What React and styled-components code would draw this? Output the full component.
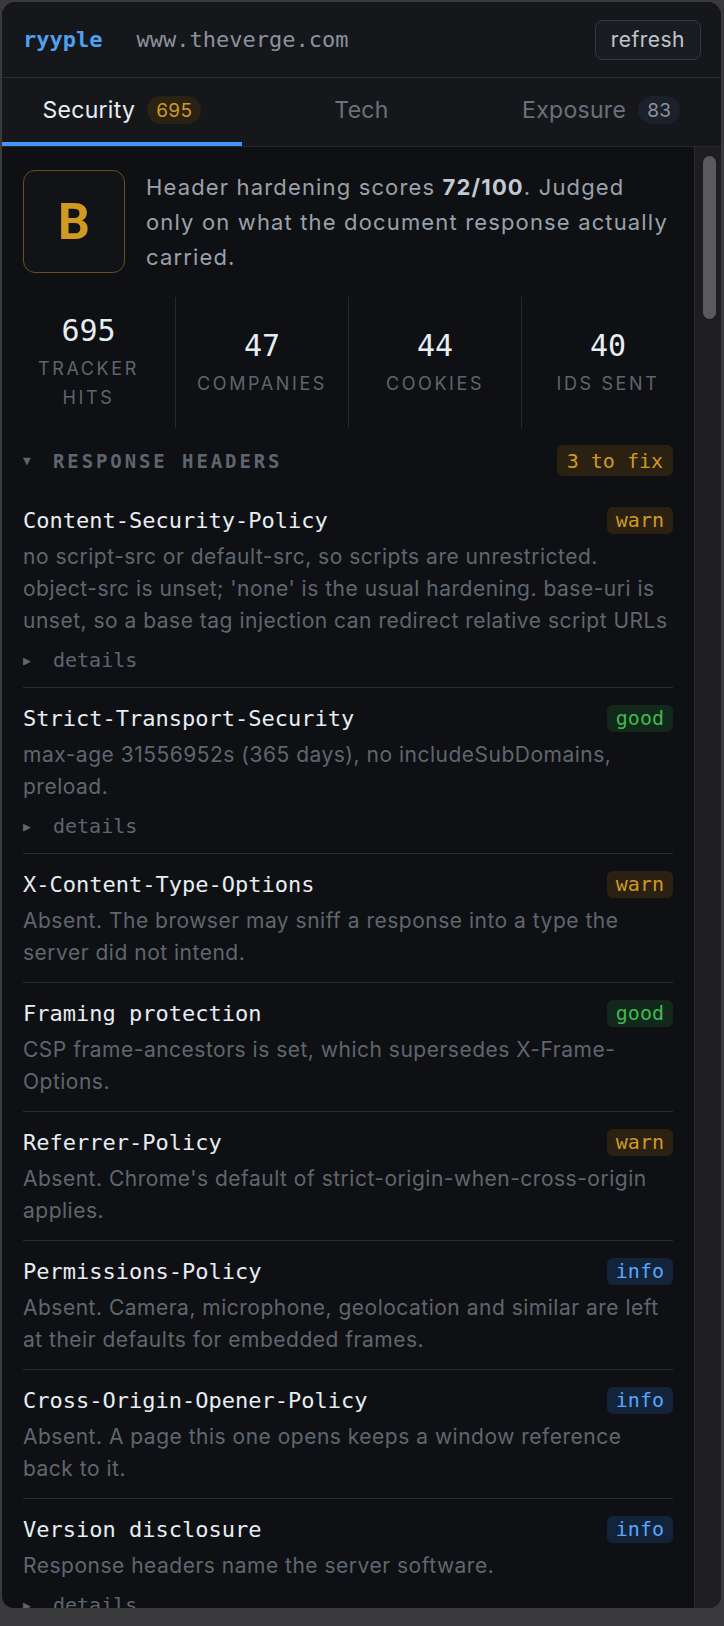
import React from 'react';
import styled, { createGlobalStyle } from 'styled-components';

const GlobalStyle = createGlobalStyle`
  html, body { margin: 0; padding: 0; background: #3a3a3c; }
  * { box-sizing: border-box; }
`;

const sans = `Inter, "Noto Sans", sans-serif`;
const mono = `"DejaVu Sans Mono", "Liberation Mono", monospace`;

const tones = {
  warn: { bg: '#2a2112', fg: '#d29922' },
  good: { bg: '#12281a', fg: '#3fb950' },
  info: { bg: '#13233a', fg: '#58a6ff' },
};

const Frame = styled.div`
  height: 1626px;
  padding: 2px 3px 18px 2px;
  display: flex;
  background: #3a3a3c;
`;

const Panel = styled.div`
  flex: 1;
  display: flex;
  flex-direction: column;
  background: #0f1013;
  border-radius: 14px 14px 12px 12px;
  overflow: hidden;
`;

const Header = styled.header`
  height: 76px;
  flex-shrink: 0;
  display: flex;
  align-items: center;
  justify-content: space-between;
  padding: 0 20px 0 21px;
  background: #16171b;
  border-bottom: 1px solid #2a2d33;
`;

const Brand = styled.div`
  display: flex;
  align-items: baseline;
  gap: 34px;
  font-family: ${mono};
  font-size: 22px;
`;

const Logo = styled.span`
  color: #4ea1f0;
  font-weight: 700;
`;

const Domain = styled.span`
  color: #8b929b;
`;

const RefreshButton = styled.button`
  height: 40px;
  padding: 0 15px;
  border: 1px solid #343840;
  border-radius: 8px;
  background: #1a1c21;
  color: #bfc5cd;
  font-family: ${sans};
  font-size: 21px;
  letter-spacing: 0.5px;
`;

const Tabs = styled.nav`
  height: 69px;
  flex-shrink: 0;
  display: flex;
  background: #16171b;
  border-bottom: 1px solid #24272c;
`;

const Tab = styled.div`
  flex: 1;
  display: flex;
  align-items: center;
  justify-content: center;
  gap: 12px;
  font-family: ${sans};
  font-size: 23px;
  letter-spacing: 0.3px;
  color: ${p => (p.$active ? '#e6edf3' : '#6b717a')};
  border-bottom: 4px solid ${p => (p.$active ? '#4493f8' : 'transparent')};
`;

const Count = styled.span`
  height: 28px;
  padding: 0 9px;
  border-radius: 14px;
  display: inline-flex;
  align-items: center;
  font-size: 19px;
  letter-spacing: 0.3px;
  background: ${p => (p.$warn ? '#2a2313' : '#1b202b')};
  color: ${p => (p.$warn ? '#d29922' : '#8b929b')};
`;

const Body = styled.div`
  flex: 1;
  min-height: 0;
  display: flex;
`;

const Scroll = styled.main`
  flex: 1;
  overflow: hidden;
  padding: 23px 21px 0;
`;

const Track = styled.div`
  width: 27px;
  flex-shrink: 0;
  padding: 9px 5px 0 8px;
  background: #1e1e20;
  border-left: 1px solid #2c2c2f;
`;

const Thumb = styled.div`
  height: 163px;
  border-radius: 7px;
  background: #5a5a5e;
`;

const Summary = styled.section`
  display: flex;
  gap: 21px;
  align-items: flex-start;
`;

const Grade = styled.div`
  width: 102px;
  height: 103px;
  flex-shrink: 0;
  display: flex;
  align-items: center;
  justify-content: center;
  border: 1.5px solid #6a4f1e;
  border-radius: 12px;
  background: #121317;
  color: #d29922;
  font-family: Roboto, ${sans};
  font-weight: 700;
  font-size: 50px;
`;

const SummaryText = styled.p`
  margin: 0;
  font-family: ${sans};
  font-size: 22px;
  letter-spacing: 1.15px;
  line-height: 35px;
  color: #9aa1aa;

  b {
    color: #c3c9d1;
  }
`;

const Stats = styled.section`
  margin: 22px -21px 0;
  height: 131px;
  display: grid;
  grid-template-columns: repeat(4, 1fr);
`;

const Stat = styled.div`
  display: flex;
  flex-direction: column;
  align-items: center;
  justify-content: center;
  padding: 0 16px;
  text-align: center;
  border-left: ${p => (p.$first ? 'none' : '1px solid #25282d')};
`;

const StatValue = styled.div`
  font-family: ${mono};
  font-size: 30px;
  line-height: 36px;
  color: #e6edf3;
  margin-bottom: 5px;
`;

const StatLabel = styled.div`
  font-family: ${sans};
  font-size: 18px;
  line-height: 29px;
  letter-spacing: 2.6px;
  text-transform: uppercase;
  color: #5f656e;
`;

const SectionHead = styled.div`
  margin: 17px 0 14px;
  height: 31px;
  display: flex;
  align-items: center;
  justify-content: space-between;
`;

const SectionTitle = styled.div`
  display: flex;
  align-items: center;
  font-family: ${mono};
  font-weight: 700;
  font-size: 19px;
  letter-spacing: 2.9px;
  color: #5f656e;
`;

const Caret = styled.span`
  width: 30px;
  font-size: 13px;
  letter-spacing: 0;
`;

const Pill = styled.span`
  height: ${p => (p.$tall ? '31px' : '27px')};
  padding: 0 ${p => (p.$tall ? '10px' : '9px')};
  display: inline-flex;
  align-items: center;
  border-radius: 6px;
  font-family: ${mono};
  font-size: 20px;
  background: ${p => tones[p.$tone].bg};
  color: ${p => tones[p.$tone].fg};
`;

const Row = styled.article`
  padding: 16px 0 13px;
  border-bottom: 1px solid #2a2c30;
`;

const RowHead = styled.div`
  height: 28px;
  display: flex;
  align-items: center;
  justify-content: space-between;
`;

const RowTitle = styled.span`
  font-family: ${mono};
  font-size: 22px;
  color: #e6edf3;
`;

const RowText = styled.p`
  margin: 7px 0 0;
  font-family: ${sans};
  font-size: 21px;
  letter-spacing: 0.5px;
  line-height: 32px;
  color: #60666e;
`;

const Details = styled.div`
  margin-top: 9px;
  height: 28px;
  display: flex;
  align-items: center;
  font-family: ${mono};
  font-size: 20px;
  color: #5f656e;
`;

const headers = [
  {
    name: 'Content-Security-Policy',
    tone: 'warn',
    text: "no script-src or default-src, so scripts are unrestricted. object-src is unset; 'none' is the usual hardening. base-uri is unset, so a base tag injection can redirect relative script URLs",
    details: true,
  },
  {
    name: 'Strict-Transport-Security',
    tone: 'good',
    text: 'max-age 31556952s (365 days), no includeSubDomains, preload.',
    details: true,
  },
  {
    name: 'X-Content-Type-Options',
    tone: 'warn',
    text: 'Absent. The browser may sniff a response into a type the server did not intend.',
  },
  {
    name: 'Framing protection',
    tone: 'good',
    text: 'CSP frame-ancestors is set, which supersedes X-Frame-Options.',
  },
  {
    name: 'Referrer-Policy',
    tone: 'warn',
    text: "Absent. Chrome's default of strict-origin-when-cross-origin applies.",
  },
  {
    name: 'Permissions-Policy',
    tone: 'info',
    text: 'Absent. Camera, microphone, geolocation and similar are left at their defaults for embedded frames.',
  },
  {
    name: 'Cross-Origin-Opener-Policy',
    tone: 'info',
    text: 'Absent. A page this one opens keeps a window reference back to it.',
  },
  {
    name: 'Version disclosure',
    tone: 'info',
    text: 'Response headers name the server software.',
    details: true,
  },
];

const stats = [
  { value: 695, label: 'Tracker hits' },
  { value: 47, label: 'Companies' },
  { value: 44, label: 'Cookies' },
  { value: 40, label: 'IDs sent' },
];

export default function App() {
  return (
    <Frame>
      <GlobalStyle />
      <Panel>
        <Header>
          <Brand>
            <Logo>ryyple</Logo>
            <Domain>www.theverge.com</Domain>
          </Brand>
          <RefreshButton>refresh</RefreshButton>
        </Header>
        <Tabs>
          <Tab $active>
            Security <Count $warn>695</Count>
          </Tab>
          <Tab>Tech</Tab>
          <Tab>
            Exposure <Count>83</Count>
          </Tab>
        </Tabs>
        <Body>
          <Scroll>
            <Summary>
              <Grade>B</Grade>
              <SummaryText>
                Header hardening scores <b>72/100</b>. Judged only on what the document response actually carried.
              </SummaryText>
            </Summary>
            <Stats>
              {stats.map((s, i) => (
                <Stat key={s.label} $first={i === 0}>
                  <StatValue>{s.value}</StatValue>
                  <StatLabel>{s.label}</StatLabel>
                </Stat>
              ))}
            </Stats>
            <SectionHead>
              <SectionTitle>
                <Caret>▼</Caret>RESPONSE HEADERS
              </SectionTitle>
              <Pill $tone="warn" $tall>3 to fix</Pill>
            </SectionHead>
            {headers.map(h => (
              <Row key={h.name}>
                <RowHead>
                  <RowTitle>{h.name}</RowTitle>
                  <Pill $tone={h.tone}>{h.tone}</Pill>
                </RowHead>
                <RowText>{h.text}</RowText>
                {h.details && (
                  <Details>
                    <Caret>▶</Caret>details
                  </Details>
                )}
              </Row>
            ))}
          </Scroll>
          <Track>
            <Thumb />
          </Track>
        </Body>
      </Panel>
    </Frame>
  );
}
